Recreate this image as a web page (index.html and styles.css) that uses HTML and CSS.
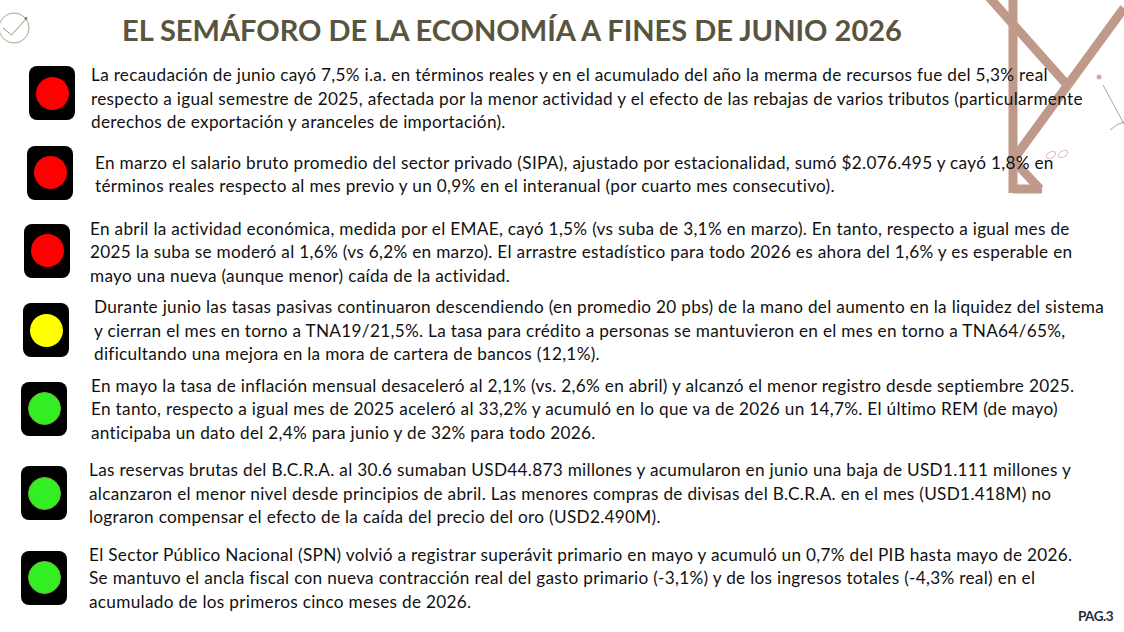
FILE: index.html
```html
<!DOCTYPE html>
<html lang="es">
<head>
<meta charset="utf-8">
<title>El semáforo de la economía</title>
<link rel="stylesheet" href="styles.css">
</head>
<body>
<div class="page">
  <svg class="deco" width="190" height="200" viewBox="934 0 190 200" aria-hidden="true">
    <g stroke="#bf9a8b" stroke-width="9" fill="none" stroke-linecap="butt">
      <line x1="1013" y1="0" x2="1013" y2="193"/>
      <line x1="988" y1="-4" x2="1068" y2="86"/>
      <line x1="1124" y1="8" x2="1013" y2="160"/>
      <line x1="1013" y1="160" x2="1040" y2="189"/>
      <line x1="1013" y1="189" x2="1042" y2="189"/>
    </g>
    <g stroke="#d9b8ae" stroke-width="1" fill="none">
      <ellipse cx="1051" cy="155" rx="5" ry="3" transform="rotate(-30 1051 155)"/>
      <ellipse cx="1063" cy="154" rx="5" ry="3" transform="rotate(-30 1063 154)"/>
    </g>
    <circle cx="1099" cy="77" r="2.5" fill="#c9aaa5"/>
    <line x1="1103" y1="85" x2="1124" y2="124" stroke="#8f8f8f" stroke-width="0.8"/>
    <path d="M1110 130 Q1116 124 1124 122" stroke="#8f8f8f" stroke-width="0.8" fill="none"/>
  </svg>

  <header class="header">
    <svg class="logo" width="32" height="48" viewBox="0 0 32 48" aria-hidden="true">
      <circle cx="14" cy="28" r="15" fill="none" stroke="#94a284" stroke-width="0.9"/>
      <polyline points="3,28 11.5,35 25,20" fill="none" stroke="#8a9a78" stroke-width="1"/>
      <circle cx="26" cy="18.5" r="1.4" fill="#6f8060"/>
    </svg>
    <h1 class="title">EL SEMÁFORO DE LA ECONOMÍA A FINES DE JUNIO 2026</h1>
  </header>

  <main class="list">
    <section class="item item-1">
      <div class="light"><span class="lamp red"></span></div>
      <p class="text">La recaudación de junio cayó 7,5% i.a. en términos reales y en el acumulado del año la merma de recursos fue del 5,3% real<br>respecto a igual semestre de 2025, afectada por la menor actividad y el efecto de las rebajas de varios tributos (particularmente<br>derechos de exportación y aranceles de importación).</p>
    </section>
    <section class="item item-2">
      <div class="light"><span class="lamp red"></span></div>
      <p class="text">En marzo el salario bruto promedio del sector privado (SIPA), ajustado por estacionalidad, sumó $2.076.495 y cayó 1,8% en<br>términos reales respecto al mes previo y un 0,9% en el interanual (por cuarto mes consecutivo).</p>
    </section>
    <section class="item item-3">
      <div class="light"><span class="lamp red"></span></div>
      <p class="text">En abril la actividad económica, medida por el EMAE, cayó 1,5% (vs suba de 3,1% en marzo). En tanto, respecto a igual mes de<br>2025 la suba se moderó al 1,6% (vs 6,2% en marzo). El arrastre estadístico para todo 2026 es ahora del 1,6% y es esperable en<br>mayo una nueva (aunque menor) caída de la actividad.</p>
    </section>
    <section class="item item-4">
      <div class="light"><span class="lamp yellow"></span></div>
      <p class="text">Durante junio las tasas pasivas continuaron descendiendo (en promedio 20 pbs) de la mano del aumento en la liquidez del sistema<br>y cierran el mes en torno a TNA19/21,5%. La tasa para crédito a personas se mantuvieron en el mes en torno a TNA64/65%,<br>dificultando una mejora en la mora de cartera de bancos (12,1%).</p>
    </section>
    <section class="item item-5">
      <div class="light"><span class="lamp green"></span></div>
      <p class="text">En mayo la tasa de inflación mensual desaceleró al 2,1% (vs. 2,6% en abril) y alcanzó el menor registro desde septiembre 2025.<br>En tanto, respecto a igual mes de 2025 aceleró al 33,2% y acumuló en lo que va de 2026 un 14,7%. El último REM (de mayo)<br>anticipaba un dato del 2,4% para junio y de 32% para todo 2026.</p>
    </section>
    <section class="item item-6">
      <div class="light"><span class="lamp green"></span></div>
      <p class="text">Las reservas brutas del B.C.R.A. al 30.6 sumaban USD44.873 millones y acumularon en junio una baja de USD1.111 millones y<br>alcanzaron el menor nivel desde principios de abril. Las menores compras de divisas del B.C.R.A. en el mes (USD1.418M) no<br>lograron compensar el efecto de la caída del precio del oro (USD2.490M).</p>
    </section>
    <section class="item item-7">
      <div class="light"><span class="lamp green"></span></div>
      <p class="text">El Sector Público Nacional (SPN) volvió a registrar superávit primario en mayo y acumuló un 0,7% del PIB hasta mayo de 2026.<br>Se mantuvo el ancla fiscal con nueva contracción real del gasto primario (-3,1%) y de los ingresos totales (-4,3% real) en el<br>acumulado de los primeros cinco meses de 2026.</p>
    </section>
  </main>

  <div class="pagenum">PAG.3</div>
</div>
</body>
</html>
```

FILE: styles.css
```css
* { box-sizing: border-box; }
html, body { margin: 0; padding: 0; background: #ffffff; }
body {
  font-family: Lato, "Open Sans", "DejaVu Sans", sans-serif;
  color: #111111;
}
.page {
  position: relative;
  width: 1124px;
  height: 632px;
  overflow: hidden;
}
.deco {
  position: absolute;
  top: 0;
  right: 0;
  z-index: 0;
}
.header {
  position: relative;
  z-index: 1;
  display: flex;
  align-items: flex-start;
  height: 52px;
}
.logo { flex: none; }
.title {
  margin: 0 0 0 90px;
  padding-top: 12px;
  font-size: 29px;
  font-weight: 700;
  line-height: 36px;
  color: #595440;
  white-space: nowrap;
}
.list {
  position: relative;
  z-index: 1;
  display: flex;
  flex-direction: column;
}
.item {
  display: flex;
  align-items: flex-start;
}
.light {
  flex: none;
  width: 46px;
  height: 54px;
  background: #000;
  border-radius: 8px;
  display: flex;
  align-items: center;
  justify-content: center;
}
.lamp {
  width: 33px;
  height: 33px;
  border-radius: 50%;
}
.lamp.red { background: #ff0000; }
.lamp.yellow { background: #ffff00; }
.lamp.green { background: #33ee22; border: 1.5px solid #7bb03a; }
.text {
  margin: 0;
  font-size: 17.2px;
  letter-spacing: 0.3px;
  line-height: 23.5px;
  white-space: nowrap;
}

.item-1 { margin-top: 11px; }
.item-1 .light { margin: 3px 16px 0 29px; }
.item-2 { margin-top: 12px; }
.item-2 .light { margin: 0 22px 0 27px; }
.item-2 .text { margin-top: 5px; }
.item-3 { margin-top: 17px; }
.item-3 .light { margin: 7px 20px 0 24px; }
.item-4 { margin-top: 8px; }
.item-4 .light { margin: 8px 25px 0 23px; }
.item-5 { margin-top: 8px; }
.item-5 .light { margin: 8px 24px 0 21px; }
.item-6 { margin-top: 14px; }
.item-6 .light { margin: 8px 22px 0 21px; }
.item-7 { margin-top: 14px; }
.item-7 .light { margin: 8px 22px 0 21px; }

.pagenum {
  position: absolute;
  z-index: 1;
  right: 11px;
  bottom: 9px;
  font-size: 13.5px;
  line-height: 14px;
  font-weight: 700;
  color: #1f2a3a;
  letter-spacing: -0.5px;
}
```
